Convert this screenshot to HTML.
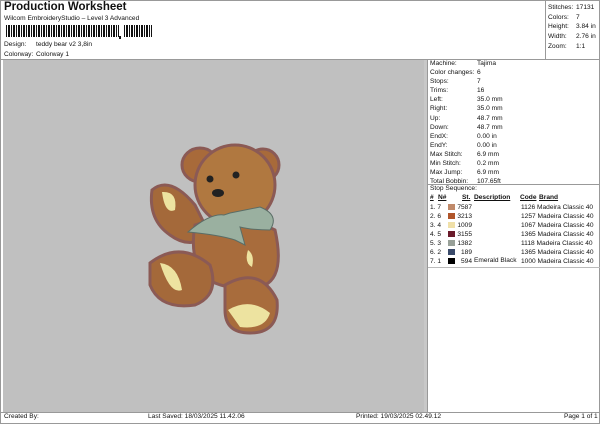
<!DOCTYPE html><html><head><style>
*{margin:0;padding:0}
body{width:600px;height:424px;background:#fff;position:relative;overflow:hidden;font-family:"Liberation Sans",sans-serif;font-size:6.6px;color:#111}
.a{position:absolute;white-space:nowrap}
.sw{display:inline-block;width:7px;height:6px;vertical-align:-1px}
</style></head><body>
<div class="a" style="left:0;top:0;width:598px;height:422px;border:1px solid #999"></div>
<div class="a" style="left:4px;top:1px;font-size:11.5px;font-weight:bold">Production Worksheet</div>
<div class="a" style="left:4px;top:15px">Wilcom EmbroideryStudio – Level 3 Advanced</div>
<div class="a" style="left:6px;top:25px;width:113px;height:12px;background:repeating-linear-gradient(90deg,#111 0 1px,#fff 1px 2px,#111 2px 3px,#111 3px 4px,#fff 4px 5px)"></div>
<div class="a" style="left:119px;top:36px;width:2px;height:3px;background:#111"></div>
<div class="a" style="left:124px;top:25px;width:28px;height:12px;background:repeating-linear-gradient(90deg,#111 0 1px,#fff 1px 2px,#111 2px 4px,#fff 4px 5px)"></div>
<div class="a" style="left:4px;top:41px">Design:</div><div class="a" style="left:36px;top:41px">teddy bear v2 3,8in</div>
<div class="a" style="left:4px;top:51px">Colorway:</div><div class="a" style="left:36px;top:51px">Colorway 1</div>
<div class="a" style="left:545px;top:0;width:1px;height:59px;background:#999"></div>
<div class="a" style="left:548px;top:3px;line-height:9.7px">Stitches:<br>Colors:<br>Height:<br>Width:<br>Zoom:</div>
<div class="a" style="left:576px;top:3px;line-height:9.7px">17131<br>7<br>3.84 in<br>2.76 in<br>1:1</div>
<div class="a" style="left:0;top:59px;width:600px;height:1px;background:#999"></div>
<div class="a" style="left:3px;top:60px;width:421px;height:352px;background:#c0c0c0"></div>
<div class="a" style="left:424px;top:60px;width:3px;height:352px;background:#c8c8c8"></div>
<div class="a" style="left:427px;top:60px;width:1px;height:352px;background:#999"></div>
<svg class="a" style="left:140px;top:135px" width="160" height="200" viewBox="0 0 160 200">
<g stroke="#8b5a55" stroke-width="3">
<ellipse cx="60" cy="30" rx="18" ry="17" fill="#a86a3a"/>
<ellipse cx="123" cy="30" rx="16" ry="16" fill="#a86a3a"/>
<path d="M12 55 Q30 40 55 70 L70 100 Q50 115 30 100 Q8 85 12 55Z" fill="#a4693a"/>
<ellipse cx="95" cy="50" rx="40" ry="40" fill="#b07840"/>
<path d="M55 90 Q95 75 135 95 Q145 140 125 150 Q90 160 60 140 Q50 115 55 90Z" fill="#a86c3c"/>
<path d="M10 128 Q40 105 70 130 Q80 160 55 170 Q20 175 10 150Z" fill="#a4693a"/>
<path d="M85 150 Q120 130 137 165 Q140 198 110 198 Q85 198 85 175Z" fill="#a86c3c"/>
</g>
<path d="M22 57 Q38 56 35 75 Q25 80 22 57Z" fill="#ede3a0"/>
<path d="M20 128 Q38 130 42 155 Q30 160 20 128Z" fill="#ede3a0"/>
<path d="M88 175 Q110 162 130 178 Q125 195 100 192Z" fill="#ede3a0"/>
<path d="M108 115 Q115 120 112 132 Q104 128 108 115Z" fill="#ede3a0"/>
<path d="M48 97 Q70 78 84 80 L90 78 L120 72 Q140 80 130 95 Q112 95 100 92 L105 110 L95 105 Q80 100 48 97Z" fill="#9ab0a0" stroke="#5a6d66" stroke-width="1"/>
<circle cx="70" cy="44" r="3.5" fill="#222"/><circle cx="96" cy="40" r="3.5" fill="#222"/>
<ellipse cx="78" cy="58" rx="6" ry="4" fill="#222"/>
</svg>
<div class="a" style="left:430px;top:59px;line-height:9.1px">Machine:<br>Color changes:<br>Stops:<br>Trims:<br>Left:<br>Right:<br>Up:<br>Down:<br>EndX:<br>EndY:<br>Max Stitch:<br>Min Stitch:<br>Max Jump:<br>Total Bobbin:</div>
<div class="a" style="left:477px;top:59px;line-height:9.1px">Tajima<br>6<br>7<br>16<br>35.0 mm<br>35.0 mm<br>48.7 mm<br>48.7 mm<br>0.00 in<br>0.00 in<br>6.9 mm<br>0.2 mm<br>6.9 mm<br>107.65ft</div>
<div class="a" style="left:428px;top:184px;width:172px;height:1px;background:#999"></div>
<div class="a" style="left:430px;top:185px">Stop Sequence:</div>
<div class="a" style="left:430px;top:194px;font-weight:bold;text-decoration:underline">#</div>
<div class="a" style="left:438px;top:194px;font-weight:bold;text-decoration:underline">N#</div>
<div class="a" style="left:462px;top:194px;font-weight:bold;text-decoration:underline">St.</div>
<div class="a" style="left:474px;top:194px;font-weight:bold;text-decoration:underline">Description</div>
<div class="a" style="left:520px;top:194px;font-weight:bold;text-decoration:underline">Code</div>
<div class="a" style="left:539px;top:194px;font-weight:bold;text-decoration:underline">Brand</div>
<div class="a" style="left:430px;top:203px;line-height:9px">1. 7<br>2. 6<br>3. 4<br>4. 5<br>5. 3<br>6. 2<br>7. 1</div>
<div class="a" style="left:448px;top:203px;line-height:9px"><span class="sw" style="background:#c08a6a"></span><br><span class="sw" style="background:#b0552a"></span><br><span class="sw" style="background:#f0e0a8"></span><br><span class="sw" style="background:#6a1a2a"></span><br><span class="sw" style="background:#98a098"></span><br><span class="sw" style="background:#3a4a6a"></span><br><span class="sw" style="background:#000"></span></div>
<div class="a" style="left:456px;top:203px;width:16px;text-align:right;line-height:9px">7587<br>3213<br>1009<br>3155<br>1382<br>189<br>594</div>
<div class="a" style="left:474px;top:257px">Emerald Black</div>
<div class="a" style="left:521px;top:203px;line-height:9px">1126 Madeira Classic 40<br>1257 Madeira Classic 40<br>1067 Madeira Classic 40<br>1365 Madeira Classic 40<br>1118 Madeira Classic 40<br>1365 Madeira Classic 40<br>1000 Madeira Classic 40</div>
<div class="a" style="left:428px;top:267px;width:172px;height:1px;background:#bbb"></div>
<div class="a" style="left:0;top:412px;width:600px;height:1px;background:#999"></div>
<div class="a" style="left:4px;top:413px">Created By:</div>
<div class="a" style="left:148px;top:413px">Last Saved: 18/03/2025 11.42.06</div>
<div class="a" style="left:356px;top:413px">Printed: 19/03/2025 02.49.12</div>
<div class="a" style="left:564px;top:413px">Page 1 of 1</div>
</body></html>
